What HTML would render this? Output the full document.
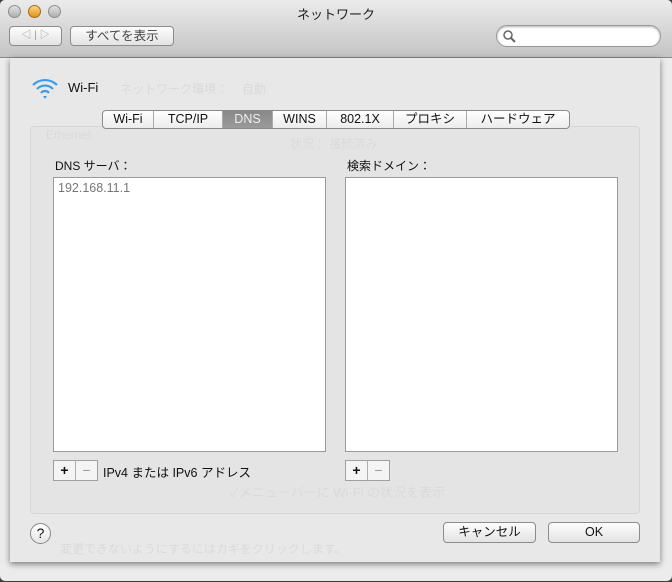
<!DOCTYPE html>
<html><head><meta charset="utf-8"><style>
*{box-sizing:border-box;margin:0;padding:0}
body{width:672px;height:582px;overflow:hidden;background:#3a3a3a;font-family:"Liberation Sans","Noto Sans CJK JP",sans-serif;font-size:12px;color:#111;position:relative}
.win{position:absolute;left:0;top:0;width:672px;height:581px;background:#ececec;border-radius:5px;overflow:hidden}
.tb{position:absolute;left:0;top:0;width:672px;height:58px;background:linear-gradient(#ebebeb,#c4c4c4);border-bottom:1px solid #8a8a8a}
.tl{position:absolute;top:5px;width:13px;height:13px;border-radius:50%;background:linear-gradient(#e0e0e0,#b0b0b0);border:1px solid #8d8d8d}
.title{position:absolute;top:4px;left:0;width:672px;text-align:center;font-size:13px;color:#222}
.btn{position:absolute;background:linear-gradient(#fdfdfd,#e3e3e3);border:1px solid #8c8c8c;border-radius:4px;text-align:center;color:#444}
.sheet{position:absolute;left:10px;top:58px;width:650px;height:504px;background:#e8e8e8;box-shadow:0 2px 6px rgba(0,0,0,.5)}
.inner{position:absolute;left:20px;top:68px;width:610px;height:388px;border:1px solid #d6d6d6;background:#e4e4e4;border-radius:4px}
.tabs{position:absolute;left:102px;top:110px;height:19px;display:flex;border:1px solid #8a8a8a;border-radius:4px;background:linear-gradient(#fff,#ececec);overflow:hidden}
.tabs div{text-align:center;line-height:17px;font-size:12.5px;border-right:1px solid #aaa;flex:none}
.tabs div:last-child{border-right:none}
.tabs .on{background:linear-gradient(#888,#9a9a9a);color:#eee}
.lbl{position:absolute;font-size:12px}
.box{position:absolute;background:#fff;border:1px solid #9a9a9a}
.pm{position:absolute;width:45px;height:21px;border:1px solid #a0a0a0;background:#f4f4f4;display:flex}
.pm span{flex:1;text-align:center;line-height:19px;font-size:14px}
.pm span:first-child{border-right:1px solid #b0b0b0;font-weight:bold}
.pm span:last-child{color:#999}
.ghost{position:absolute;color:#dadada;font-size:12px}
</style></head><body>
<div class="win">
<div class="tb">
<div class="tl" style="left:8px"></div>
<div class="tl" style="left:28px;background:linear-gradient(#fcd58a,#e0941a);border-color:#a86a10"></div>
<div class="tl" style="left:48px"></div>
<div class="title">ネットワーク</div>
<div class="btn" style="left:9px;top:26px;width:53px;height:20px;color:#999;font-size:10px;line-height:18px">◁ | ▷</div>
<div class="btn" style="left:70px;top:26px;width:104px;height:20px;line-height:18px;font-size:12.5px">すべてを表示</div>
<div style="position:absolute;left:496px;top:25px;width:165px;height:22px;border-radius:11px;background:#fff;border:1px solid #999;box-shadow:inset 0 1px 2px rgba(0,0,0,.3)"><svg width="14" height="14" style="position:absolute;left:5px;top:3px"><circle cx="6" cy="6" r="4" fill="none" stroke="#666" stroke-width="1.5"/><path d="M9 9l4 4" stroke="#666" stroke-width="2"/></svg></div>
</div>
<div class="sheet">
<div class="ghost" style="left:110px;top:22px">ネットワーク環境：</div>
<div class="ghost" style="left:232px;top:22px">自動</div>
<div class="inner"></div>
<div class="ghost" style="left:36px;top:70px">Ethernet</div>
<div class="ghost" style="left:280px;top:77px">状況： 接続済み</div>
<div class="ghost" style="left:220px;top:424px;font-size:13px">✓メニューバーに Wi-Fi の状況を表示</div>
<div class="ghost" style="left:50px;top:482px">変更できないようにするにはカギをクリックします。</div>
<svg width="30" height="26" style="position:absolute;left:20px;top:18px"><path d="M3 9a17 17 0 0 1 24 0" fill="none" stroke="#3c9be8" stroke-width="2.2"/><path d="M7 13a11 11 0 0 1 16 0" fill="none" stroke="#3c9be8" stroke-width="2.2"/><path d="M11 17a5 5 0 0 1 8 0" fill="none" stroke="#3c9be8" stroke-width="2.2"/><path d="M13 20h4l-2 3z" fill="#3c9be8"/></svg>
<div class="lbl" style="left:58px;top:22px;font-size:13px">Wi-Fi</div>
</div>
<div class="tabs"><div style="width:51px">Wi-Fi</div><div style="width:69px">TCP/IP</div><div class="on" style="width:50px">DNS</div><div style="width:54px">WINS</div><div style="width:67px">802.1X</div><div style="width:73px">プロキシ</div><div style="width:102px">ハードウェア</div></div>
<div class="lbl" style="left:55px;top:157px">DNS サーバ：</div>
<div class="lbl" style="left:347px;top:157px">検索ドメイン：</div>
<div class="box" style="left:53px;top:177px;width:273px;height:275px"><div style="position:absolute;left:4px;top:3px;color:#777;font-size:12.5px">192.168.11.1</div></div>
<div class="box" style="left:345px;top:177px;width:273px;height:275px"></div>
<div class="pm" style="left:53px;top:460px"><span>+</span><span>−</span></div>
<div class="lbl" style="left:103px;top:462px;font-size:12.5px">IPv4 または IPv6 アドレス</div>
<div class="pm" style="left:345px;top:460px"><span>+</span><span>−</span></div>
<div style="position:absolute;left:30px;top:523px;width:21px;height:21px;border-radius:50%;border:1px solid #888;background:linear-gradient(#fff,#e6e6e6);text-align:center;line-height:19px;font-size:14px">?</div>
<div class="btn" style="left:443px;top:522px;width:93px;height:21px;line-height:19px;color:#111;font-size:12.5px">キャンセル</div>
<div class="btn" style="left:548px;top:522px;width:92px;height:21px;line-height:19px;color:#111;font-size:12.5px">OK</div>
</div>
</body></html>
